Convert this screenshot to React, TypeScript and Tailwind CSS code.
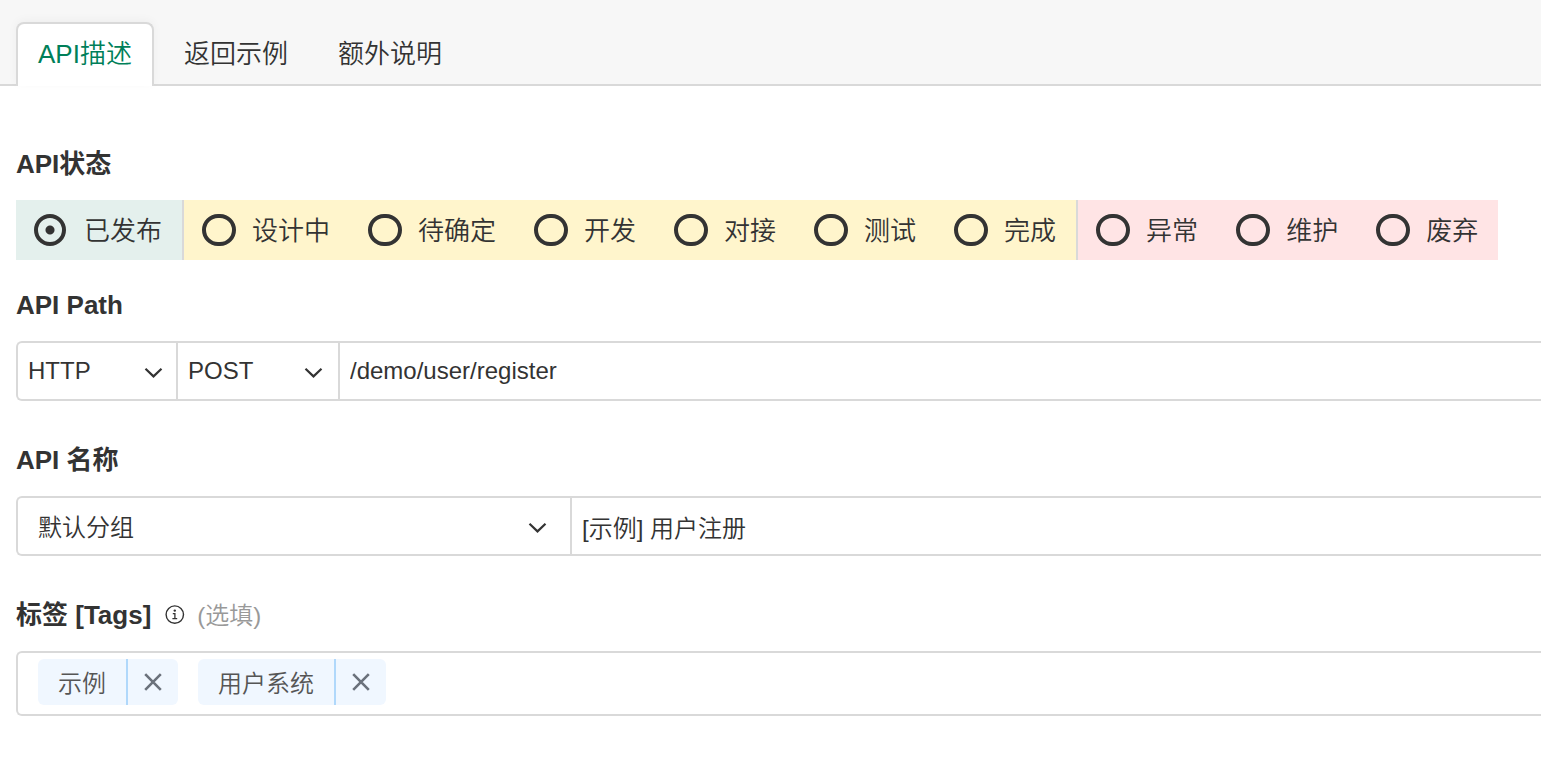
import { useState } from "react";

const tabs = ["API描述", "返回示例", "额外说明"];

const statusGroups = [
  { tone: "bg-[#e4f0ed]", items: ["已发布"] },
  {
    tone: "bg-[#fff5cc] border-l-2 border-[#d9d9d9]",
    items: ["设计中", "待确定", "开发", "对接", "测试", "完成"],
  },
  {
    tone: "bg-[#ffe4e5] border-l-2 border-[#d9d9d9]",
    items: ["异常", "维护", "废弃"],
  },
];

function Chevron({ className }: { className: string }) {
  return (
    <svg
      aria-hidden="true"
      viewBox="0 0 20 12"
      className={`pointer-events-none absolute h-3 w-5 ${className}`}
      fill="none"
      stroke="#333333"
      strokeWidth="2.2"
    >
      <path d="M1.5 1.8 9.5 9.4 17.5 1.8" />
    </svg>
  );
}

function InfoIcon() {
  return (
    <svg aria-hidden="true" viewBox="0 0 20 20" className="size-5" fill="none" stroke="#333333">
      <circle cx="9.8" cy="9.6" r="8.7" strokeWidth="1.4" />
      <circle cx="9.8" cy="5.6" r="1.2" fill="#333333" stroke="none" />
      <path d="M7.8 8.6h2.1v4.7M7.4 13.6h4.8" strokeWidth="1.3" />
    </svg>
  );
}

function Tag({ text, onRemove }: { text: string; onRemove: () => void }) {
  return (
    <li className="flex h-[46px] items-stretch overflow-hidden rounded-md bg-[#f0f7ff] text-[#555555]">
      <span className="flex items-center px-5 pt-1">{text}</span>
      <button
        type="button"
        aria-label={`移除 ${text}`}
        onClick={onRemove}
        className="flex w-[52px] items-center justify-center border-l-2 border-[#b0d8fb]"
      >
        <svg viewBox="0 0 18 18" className="size-[18px]" fill="none" stroke="#6b727c" strokeWidth="2.6">
          <path d="M1.2 1.2 16.8 16.8M16.8 1.2 1.2 16.8" />
        </svg>
      </button>
    </li>
  );
}

const labelStyle = "flex h-10 items-center text-[26px] font-bold";
const boxStyle = "mt-4 flex rounded-l-md border-2 border-r-0 border-[#d9d9d9]";

export default function App() {
  const [active, setActive] = useState(0);
  const [tags, setTags] = useState(["示例", "用户系统"]);

  return (
    <div className="min-h-screen overflow-x-hidden bg-white font-['Liberation_Sans','Noto_Sans_CJK_SC',sans-serif] text-2xl font-[350] text-[#333333]">
      <nav className="flex border-b-2 border-[#d9d9d9] bg-[#f7f7f7] pt-[22px] pl-4 text-[26px]">
        {tabs.map((tab, i) => (
          <button
            key={tab}
            type="button"
            onClick={() => setActive(i)}
            className={
              i === active
                ? "-mb-0.5 mr-[5px] h-16 rounded-t-lg border-2 border-b-0 border-[#d9d9d9] bg-white px-5 pb-0.5 text-[#007f59] shadow-[0_-2px_10px_rgba(0,0,0,0.04)]"
                : "h-[62px] px-[25px] pt-0.5"
            }
          >
            {tab}
          </button>
        ))}
      </nav>

      <form className="pt-[58px] pl-4" onSubmit={(e) => e.preventDefault()}>
        <fieldset>
          <legend className={labelStyle}>API状态</legend>
          <div className="mt-4 flex text-[26px]">
            {statusGroups.map((group) => (
              <div key={group.items[0]} className={`flex ${group.tone}`}>
                {group.items.map((item) => (
                  <label key={item} className="flex h-[60px] items-center pr-5 pl-[18px] whitespace-nowrap">
                    <input
                      type="radio"
                      name="status"
                      defaultChecked={item === "已发布"}
                      className="mr-4 h-8 w-[34px] appearance-none rounded-full border-4 border-[#333333] checked:mr-[18px] checked:w-8 checked:bg-[radial-gradient(circle,#333333_4px,transparent_5px)]"
                    />
                    <span className="pt-0.5">{item}</span>
                  </label>
                ))}
              </div>
            ))}
          </div>
        </fieldset>

        <section className="mt-[25px]">
          <label htmlFor="path" className={labelStyle}>
            API Path
          </label>
          <div className={boxStyle}>
            <div className="relative w-40 border-r-2 border-[#d9d9d9]">
              <select aria-label="协议" className="h-14 w-full appearance-none bg-transparent pl-[10px]">
                <option>HTTP</option>
                <option>HTTPS</option>
              </select>
              <Chevron className="top-6 right-3" />
            </div>
            <div className="relative w-[162px] border-r-2 border-[#d9d9d9]">
              <select aria-label="请求方式" className="h-14 w-full appearance-none bg-transparent pl-[10px]">
                <option>POST</option>
                <option>GET</option>
              </select>
              <Chevron className="top-6 right-[14px]" />
            </div>
            <input id="path" defaultValue="/demo/user/register" className="h-14 min-w-0 flex-1 px-[10px]" />
          </div>
        </section>

        <section className="mt-[39px]">
          <label htmlFor="name" className={labelStyle}>
            API 名称
          </label>
          <div className={boxStyle}>
            <div className="relative w-[554px] border-r-2 border-[#d9d9d9]">
              <select aria-label="分组" className="h-14 w-full appearance-none bg-transparent pt-1 pl-5">
                <option>默认分组</option>
              </select>
              <Chevron className="top-6 right-[22px]" />
            </div>
            <input id="name" defaultValue="[示例] 用户注册" className="h-14 min-w-0 flex-1 px-[10px]" />
          </div>
        </section>

        <section className="mt-[39px]">
          <h2 className={labelStyle}>
            标签 [Tags]
            <span className="ml-[14px]">
              <InfoIcon />
            </span>
            <span className="ml-3 pt-0.5 text-2xl font-[350] text-[#999999]">(选填)</span>
          </h2>
          <div className={boxStyle}>
            <ul className="flex gap-5 pt-[6px] pb-[9px] pl-5">
              {tags.map((tag) => (
                <Tag key={tag} text={tag} onRemove={() => setTags(tags.filter((t) => t !== tag))} />
              ))}
            </ul>
          </div>
        </section>
      </form>
    </div>
  );
}
